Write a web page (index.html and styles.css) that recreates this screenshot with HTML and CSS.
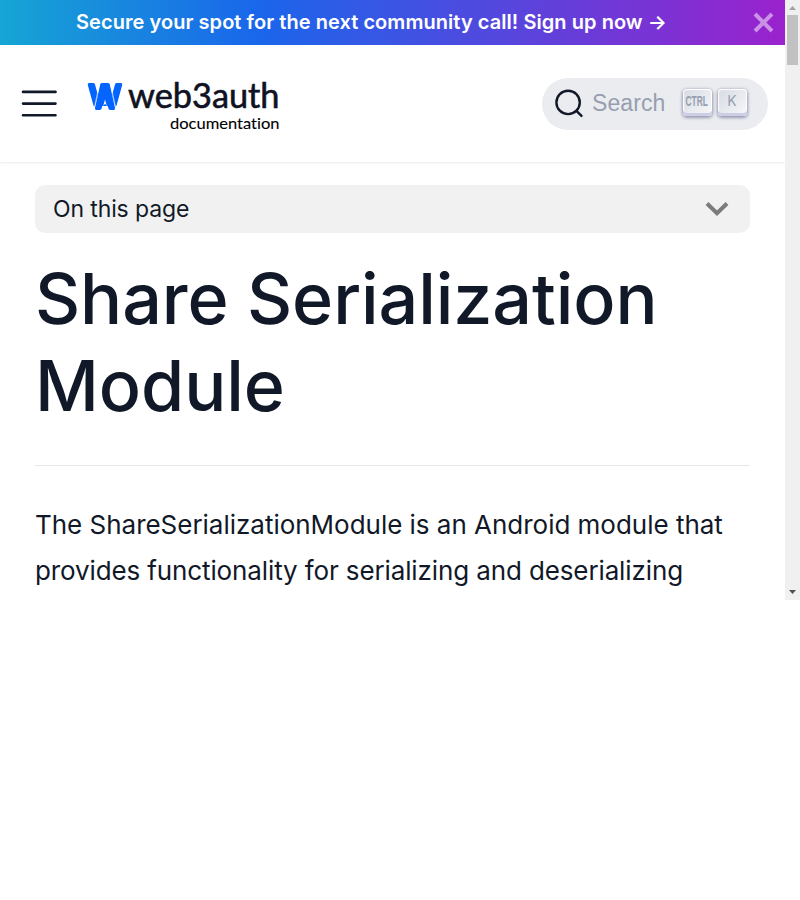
FILE: index.html
```html
<!DOCTYPE html>
<html lang="en">
<head>
<meta charset="utf-8">
<title>Share Serialization Module</title>
<link rel="stylesheet" href="styles.css">
</head>
<body>
<div class="viewport">
  <div class="page">
    <div class="announcement">
      <div class="announcement-text">Secure your spot for the next community call! Sign up now →</div>
      <svg class="announcement-close" width="21" height="21" viewBox="0 0 21 21"><path d="M2 2 19 19M19 2 2 19"/></svg>
    </div>
    <header class="navbar">
      <svg class="menu" width="36" height="28" viewBox="0 0 36 28"><path d="M2 1.9H34.5M2 13.6H34.5M2 25.2H34.5"/></svg>
      <svg class="logo" width="194" height="52" viewBox="0 0 194 52">
        <path class="logo-mark" d="M.8 4Q.3 2 2.2 2H6.2Q7.6 2 8 3.4L10.7 13.2 7.7 25.6Q6.6 25 6.4 24.2ZM35.2 4Q35.7 2 33.8 2H29.8Q28.4 2 28 3.4L25.3 13.2 28.3 25.6Q29.4 25 29.6 24.2ZM15.1 2H20.9Q22.3 2 22.8 3.4L28 26.8Q28.3 29 26.6 29H23.2Q21.8 29 21.4 27.6L20.8 25H15.2L14.6 27.6Q14.2 29 12.8 29H9.4Q7.7 29 8 26.8L13.2 3.4Q13.7 2 15.1 2ZM18 18.5L16.2 25 18 22.8 19.8 25Z"/>
        <path class="logo-gap" d="M12.2 4 7.7 25M23.8 4 28.3 25"/>
        <text class="logo-name" x="41" y="26.8" textLength="151.5" lengthAdjust="spacingAndGlyphs">web3auth</text>
        <text class="logo-sub" x="83" y="48" textLength="109.5" lengthAdjust="spacingAndGlyphs">documentation</text>
      </svg>
      <div class="search">
        <svg class="search-icon" width="29" height="29" viewBox="0 0 29 29"><circle cx="13.1" cy="13.4" r="11.7"/><path d="M21.4 21.8 26.5 26.9"/></svg>
        <span class="search-label">Search</span>
        <span class="key"><svg width="28" height="22" viewBox="0 0 28 22"><text class="ctrl" x="2.5" y="16.2" textLength="22.5" lengthAdjust="spacingAndGlyphs">CTRL</text></svg></span>
        <span class="key">K</span>
      </div>
    </header>
    <main class="content">
      <div class="toc"><span>On this page</span>
        <svg class="chevron" width="24" height="16" viewBox="0 0 24 16"><path d="M2 2.5 12 12.2 22 2.5"/></svg>
      </div>
      <h1>Share Serialization Module</h1>
      <hr>
      <p>The ShareSerializationModule is an Android module that <span class="tight">provides functionality for serializing and deserializing</span></p>
    </main>
  </div>
  <div class="scrollbar">
    <svg width="15" height="15" viewBox="0 0 15 15"><path class="arrow-up" d="M4 10H11L7.5 6Z"/></svg>
    <div class="thumb"></div>
    <svg class="down" width="15" height="15" viewBox="0 0 15 15"><path class="arrow-down" d="M4 5H11L7.5 9Z"/></svg>
  </div>
</div>
</body>
</html>
```

FILE: styles.css
```css
* { box-sizing: border-box; }
body { margin: 0; background: #fff; color: #111928; font-family: Inter, sans-serif; }
svg { display: block; flex: none; }
.viewport { display: flex; width: 800px; height: 600px; overflow: hidden; }
.page { width: 785px; height: 600px; overflow: hidden; }
.announcement { display: flex; align-items: center; height: 45px; padding-right: 11.5px; background: linear-gradient(90deg, #16a5d4 0%, #1a66eb 33%, #9a22cd 100%); }
.announcement-text { flex: 1; padding: 0 0 1px 76px; color: #fff; font-size: 20px; font-weight: 600; line-height: 24px; letter-spacing: .055px; white-space: nowrap; }
.announcement-close { stroke: #fff; stroke-width: 4; opacity: .5; fill: none; }
.navbar { display: flex; align-items: center; height: 117px; padding: 0 17px 0 20.5px; box-shadow: 0 1px 2px rgba(0,0,0,.08); }
.menu { stroke: #111928; stroke-width: 2.6; stroke-linecap: round; margin-right: 30.5px; }
.logo { margin-top: 7px; overflow: visible; }
.logo-mark { fill: #0364ff; fill-rule: evenodd; }
.logo-gap { fill: none; stroke: #fff; stroke-width: .6; }
.logo-name { font: 400 34px Lato, sans-serif; fill: #0f1222; stroke: #0f1222; stroke-width: .6; }
.logo-sub { font: 400 16px Lato, sans-serif; font-variant-ligatures: none; fill: #000; stroke: #000; stroke-width: .1; }
.search { display: flex; align-items: center; width: 226px; height: 52px; margin: 1px 0 0 auto; padding: 0 0 2px 12.5px; border-radius: 26px; background: #ebecf0; }
.search-icon { fill: none; stroke: #111928; stroke-width: 2.4; stroke-linecap: round; }
.search-label { width: 99px; flex: none; padding-left: 8.5px; color: #969faf; font: 23px/27px "Liberation Sans", sans-serif; letter-spacing: .1px; }
.key { display: flex; flex: none; align-items: center; justify-content: center; width: 29px; height: 27px; margin: -2px 6px 0 0; padding-bottom: 2px; border-radius: 4px; color: #969faf; font: 14px/16px Inter, sans-serif; background: linear-gradient(-225deg, #d5dbe4, #f8f8f8); box-shadow: inset 0 -3px 0 0 #cdcde6, inset 0 0 1px 1px #fff, 0 1px 3px 1px rgba(30,35,90,.4); }
.ctrl { font: bold 15px "Liberation Sans", sans-serif; fill: #969faf; }
.content { padding: 23px 35px 0; }
.toc { display: flex; align-items: center; justify-content: space-between; height: 48px; padding: 0 21px 0 18px; border-radius: 10px; background: #f1f1f1; font-size: 23px; line-height: 32px; letter-spacing: -.12px; }
.chevron { fill: none; stroke: #7b7b7b; stroke-width: 4; }
h1 { margin: 22px 0 0; font-size: 70px; font-weight: 500; line-height: 87px; letter-spacing: -.1px; }
hr { height: 1px; margin: 36px 0 0; border: 0; background: #e5e7eb; }
p { margin: 36px -20px 0 0; font-size: 26px; line-height: 46px; letter-spacing: -.02px; }
.tight { letter-spacing: -.12px; }
.scrollbar { display: flex; flex-direction: column; width: 15px; background: #f0f0f0; }
.thumb { width: 11px; height: 50px; margin-left: 2px; background: #c1c1c1; }
.down { margin-top: auto; }
.arrow-up { fill: #a3a3a3; }
.arrow-down { fill: #505050; }
```
